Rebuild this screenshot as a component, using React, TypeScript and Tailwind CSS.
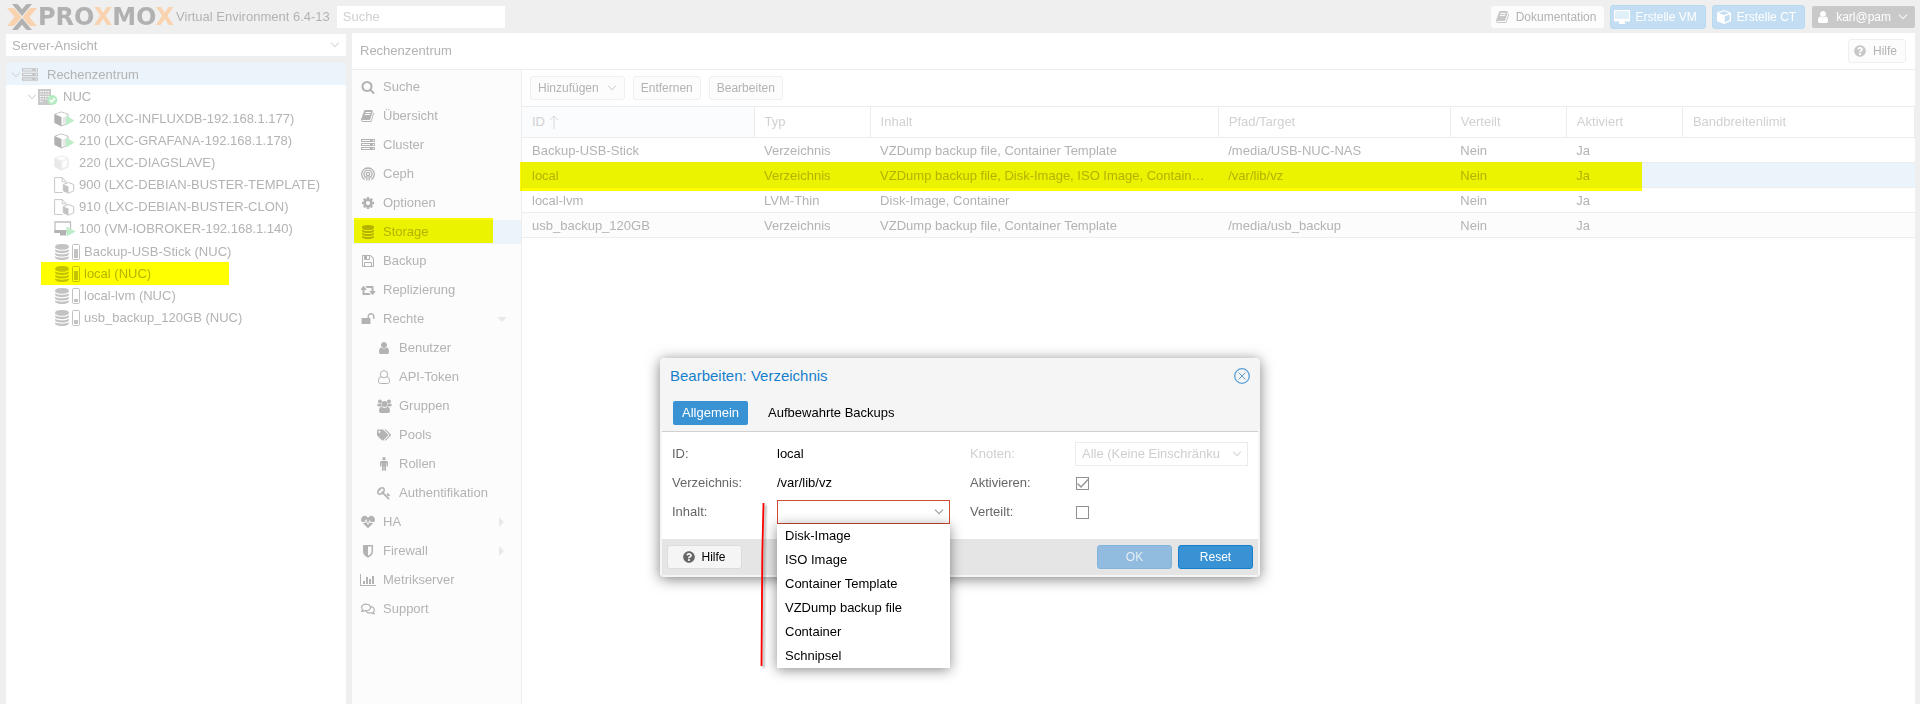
import type { ReactNode } from "react";
import clsx from "clsx";
import { FaHeartbeat, FaQuestionCircle, FaRegComments, FaTags } from "react-icons/fa";

const PATHS = {
  book: "M1639 478q40 57 18 129l-275 906q-19 64-76.5 107.5t-122.5 43.5h-923q-77 0-148.5-53.5t-99.5-131.5q-24-67-2-127 0-4 3-27t4-37q1-8-3-21.5t-3-19.5q2-11 8-21t16.5-23.5 16.5-23.5q23-38 45-91.5t30-91.5q3-10 .5-30t-.5-28q3-11 17-28t17-23q21-36 42-92t25-90q1-9-2.5-32t.5-28q4-13 22-30.5t22-22.5q19-26 42.5-84.5t27.5-96.5q1-8-3-25.5t-2-26.5q2-8 9-18t18-23 17-21q8-12 16.5-30.5t15-35 16-36 19.5-32 26.5-23.5 36-11.5 47.5 5.5l-1 3q38-9 51-9h761q74 0 114 56t18 130l-274 906q-36 119-71.5 153.5t-128.5 34.5h-869q-27 0-38 15-11 16-1 43 24 70 144 70h923q29 0 56-15.5t35-41.5l300-987q7-22 5-57 38 15 59 43zm-1064 2q-4 13 2 22.5t20 9.5h608q13 0 25.5-9.5t16.5-22.5l21-64q4-13-2-22.5t-20-9.5h-608q-13 0-25.5 9.5t-16.5 22.5zm-83 256q-4 13 2 22.5t20 9.5h608q13 0 25.5-9.5t16.5-22.5l21-64q4-13-2-22.5t-20-9.5h-608q-13 0-25.5 9.5t-16.5 22.5z",
  search:
    "M1216 832q0-185-131.5-316.5t-316.5-131.5-316.5 131.5-131.5 316.5 131.5 316.5 316.5 131.5 316.5-131.5 131.5-316.5zm512 832q0 52-38 90t-90 38q-54 0-90-38l-343-342q-179 124-399 124-143 0-273.5-55.5t-225-150-150-225-55.5-273.5 55.5-273.5 150-225 225-150 273.5-55.5 273.5 55.5 225 150 150 225 55.5 273.5q0 220-124 399l343 343q37 37 37 90z",
  server:
    "M128 1408h1024v-128h-1024v128zm0-512h1024v-128h-1024v128zm1568 448q0-40-28-68t-68-28-68 28-28 68 28 68 68 28 68-28 28-68zm-1568-960h1024v-128h-1024v128zm1568 448q0-40-28-68t-68-28-68 28-28 68 28 68 68 28 68-28 28-68zm0-512q0-40-28-68t-68-28-68 28-28 68 28 68 68 28 68-28 28-68zm96 832v384h-1792v-384h1792zm0-512v384h-1792v-384h1792zm0-512v384h-1792v-384h1792z",
  cog: "M1152 896q0-106-75-181t-181-75-181 75-75 181 75 181 181 75 181-75 75-181zm512-109v222q0 12-8 23t-20 13l-185 28q-19 54-39 91 35 50 107 138 10 12 10 25t-9 23q-27 37-99 108t-94 71q-12 0-26-9l-138-108q-44 23-91 38-16 136-29 186-7 28-36 28h-222q-14 0-24.5-8.5t-11.5-21.5l-28-184q-49-16-90-37l-141 107q-10 9-25 9-14 0-25-11-126-114-165-168-7-10-7-23 0-12 8-23 15-21 51-66.5t54-70.5q-27-50-41-99l-183-27q-13-2-21-12.5t-8-23.5v-222q0-12 8-23t19-13l186-28q14-46 39-92-40-57-107-138-10-12-10-24 0-10 9-23 26-36 98.5-107.5t94.5-71.5q13 0 26 10l138 107q44-23 91-38 16-136 29-186 7-28 36-28h222q14 0 24.5 8.5t11.5 21.5l28 184q49 16 90 37l142-107q9-9 24-9 13 0 25 10 129 119 165 170 7 8 7 22 0 12-8 23-15 21-51 66.5t-54 70.5q26 50 41 98l183 28q13 2 21 12.5t8 23.5z",
  database:
    "M896 768q237 0 443-43t325-127v170q0 69-103 128t-280 93.5-385 34.5-385-34.5-280-93.5-103-128v-170q119 84 325 127t443 43zm0 768q237 0 443-43t325-127v170q0 69-103 128t-280 93.5-385 34.5-385-34.5-280-93.5-103-128v-170q119 84 325 127t443 43zm0-384q237 0 443-43t325-127v170q0 69-103 128t-280 93.5-385 34.5-385-34.5-280-93.5-103-128v-170q119 84 325 127t443 43zm0-1152q208 0 385 34.5t280 93.5 103 128v128q0 69-103 128t-280 93.5-385 34.5-385-34.5-280-93.5-103-128v-128q0-69 103-128t280-93.5 385-34.5z",
  floppy:
    "M512 1536h768v-384h-768v384zm896 0h128v-896q0-14-10-38.5t-20-34.5l-281-281q-10-10-34-20t-39-10v416q0 40-28 68t-68 28h-576q-40 0-68-28t-28-68v-416h-128v1280h128v-416q0-40 28-68t68-28h832q40 0 68 28t28 68v416zm-384-928v-320q0-13-9.5-22.5t-22.5-9.5h-192q-13 0-22.5 9.5t-9.5 22.5v320q0 13 9.5 22.5t22.5 9.5h192q13 0 22.5-9.5t9.5-22.5zm640 32v928q0 40-28 68t-68 28h-1344q-40 0-68-28t-28-68v-1344q0-40 28-68t68-28h928q40 0 88 20t76 48l280 280q28 28 48 76t20 88z",
  retweet:
    "M1216 1504q0 13-9.5 22.5t-22.5 9.5h-960q-8 0-13.5-2t-9-7-5.5-8-3-11.5-1-11.5v-600h-192q-26 0-45-19t-19-45q0-24 15-41l320-384q19-22 49-22t49 22l320 384q15 17 15 41 0 26-19 45t-45 19h-192v384h576q16 0 25 11l160 192q7 10 7 21zm640-416q0 24-15 41l-320 384q-20 23-49 23t-49-23l-320-384q-15-17-15-41 0-26 19-45t45-19h192v-384h-576q-16 0-25-12l-160-192q-7-9-7-20 0-13 9.5-22.5t22.5-9.5h960q8 0 13.5 2t9 7 5.5 8 3 11.5 1 11.5v600h192q26 0 45 19t19 45z",
  unlock:
    "M1728 576v256q0 26-19 45t-45 19h-64q-26 0-45-19t-19-45v-256q0-106-75-181t-181-75-181 75-75 181v192h96q40 0 68 28t28 68v576q0 40-28 68t-68 28h-960q-40 0-68-28t-28-68v-576q0-40 28-68t68-28h672v-192q0-185 131.5-316.5t316.5-131.5 316.5 131.5 131.5 316.5z",
  user: "M1536 1399q0 109-62.5 187t-150.5 78h-854q-88 0-150.5-78t-62.5-187q0-85 8.5-160.5t31.5-152 58.5-131 94-89 134.5-34.5q131 128 313 128t313-128q76 0 134.5 34.5t94 89 58.5 131 31.5 152 8.5 160.5zm-256-887q0 159-112.5 271.5t-271.5 112.5-271.5-112.5-112.5-271.5 112.5-271.5 271.5-112.5 271.5 112.5 112.5 271.5z",
  key: "M832 512q0-80-56-136t-136-56-136 56-56 136q0 42 19 83-41-19-83-19-80 0-136 56t-56 136 56 136 136 56 136-56 56-136q0-42-19-83 41 19 83 19 80 0 136-56t56-136zm851 704q0 17-49 66t-66 49q-9 0-28.5-16t-36.5-33-38.5-40-24.5-26l-96 96 220 220q28 28 28 68 0 42-39 81t-81 39q-40 0-68-28l-671-671q-176 131-365 131-163 0-265.5-102.5t-102.5-265.5q0-160 95-313t248-248 313-95q163 0 265.5 102.5t102.5 265.5q0 189-131 365l355 355 96-96q-3-3-26-24.5t-40-38.5-33-36.5-16-28.5q0-17 49-66t66-49q13 0 23 10 6 6 46 44.5t82 79.5 86.5 86 73 78 28.5 41z",
};

const Glyph = ({ name, className = "size-[14px]" }: { name: keyof typeof PATHS; className?: string }) => (
  <svg viewBox={name === "retweet" ? "0 0 1920 1792" : "0 0 1792 1792"} className={className} fill="currentColor" aria-hidden>
    <path d={PATHS[name]} />
  </svg>
);

const Chevron = ({ className }: { className?: string }) => (
  <svg viewBox="0 0 10 6" className={clsx("pointer-events-none h-[6px] w-[10px]", className)} fill="none" stroke="currentColor" aria-hidden>
    <path d="M1 .7l4 4 4-4" strokeWidth="1.2" />
  </svg>
);

const CephIcon = () => (
  <svg viewBox="0 0 14 14" className="size-[14px]" fill="none" stroke="currentColor" strokeWidth="1.3" aria-hidden>
    <path d="M3.6 12.6a6.3 6.3 0 1 1 6.8 0M5 10.6a4 4 0 1 1 4 0" />
    <circle cx="7" cy="7" r="1.7" />
    <path d="M5.9 9v4.6M8.1 9v4.6" />
  </svg>
);

const UserOutline = () => (
  <svg viewBox="0 0 14 14" className="size-[14px]" fill="none" stroke="currentColor" aria-hidden>
    <path d="M4.2 6.6C2.4 6.9 1.5 8.6 1.5 11c0 1.600.8 2.500 2.200 2.500h6.600c1.400 0 2.200-.9 2.200-2.500 0-2.400-.9-4.100-2.700-4.400" />
    <circle cx="7" cy="4.2" r="3.6" />
  </svg>
);

const UserGroup = () => (
  <svg viewBox="0 0 15 14" className="h-[14px] w-[15px]" fill="currentColor" aria-hidden>
    <circle cx="3" cy="2.5" r="2" />
    <circle cx="12" cy="2.5" r="2" />
    <circle cx="7.5" cy="5" r="2.900" />
    <path d="M1.300 4.800h3c0 1.200.3 1.900.8 2.700H1.700C.6 7.500.2 6.700.3 5.800c0-.6.4-1 1-1zM13.700 4.800h-3c0 1.200-.3 1.900-.8 2.700h3.400c1.100 0 1.500-.8 1.400-1.700 0-.6-.4-1-1-1z" />
    <path d="M4.600 7.800c1.600 1.500 4.200 1.500 5.800 0 1.700.2 2.600 1.700 2.600 4 0 1.400-.8 2.200-2 2.200H4c-1.200 0-2-.8-2-2.200 0-2.300.9-3.800 2.600-4z" />
  </svg>
);

const Person = () => (
  <svg viewBox="0 0 14 14" className="size-[14px]" fill="currentColor" aria-hidden>
    <circle cx="7" cy="1.800" r="1.700" />
    <path d="M4.500 4h5c.9 0 1.500.6 1.500 1.500V9c0 .9-1.500.9-1.500 0V6H9v7.200c0 1-1.700 1-1.700 0V9.500h-.6v3.700c0 1-1.700 1-1.700 0V6h-.5v3c0 .9-1.500.9-1.500 0V5.500C3 4.600 3.600 4 4.500 4z" />
  </svg>
);

const Shield = () => (
  <svg viewBox="0 0 14 14" className="size-[14px]" fill="currentColor" aria-hidden>
    <path fillRule="evenodd" d="M2.500 1h9c.3 0 .5.200.5.500v6c0 2.900-2.200 4.900-5 6.200C4.200 12.400 2 10.400 2 7.500v-6c0-.3.2-.5.5-.5zM7 2.500v9.300c2-1 3.500-2.400 3.500-4.300v-5z" />
  </svg>
);

const BarChart = () => (
  <svg viewBox="0 0 16 14" className="h-[14px] w-[16px]" fill="currentColor" aria-hidden>
    <path d="M0 1h1v11h15v1H0zM3 8h2v3H3zM6 4h2v7H6zM9 6h2v5H9zM12 3h2v8h-2z" />
  </svg>
);

const SolidCube = () => (
  <svg viewBox="0 0 14 14" className="size-[14px]" fill="currentColor" aria-hidden>
    <path fillRule="evenodd" d="M7 0l6.300 2.300c.4.200.7.5.7.900v7.300c0 .4-.2.800-.6 1L7 14l-6.400-2.500c-.4-.2-.6-.6-.6-1V3.200c0-.4.3-.7.700-.9zM7 1.200L1.800 3.100 7 5l5.200-1.900zM7.800 6.300v6l4.800-2V4.500z" />
  </svg>
);

const SolidMonitor = () => (
  <svg viewBox="0 0 16 14" className="h-[14px] w-4" fill="currentColor" aria-hidden>
    <path fillRule="evenodd" d="M1 0h14c.6 0 1 .4 1 1v9.500c0 .6-.4 1-1 1h-4.500l.5 1.500c.6.2.6 1 0 1H5c-.6 0-.6-.8 0-1l.5-1.500H1c-.6 0-1-.4-1-1V1c0-.6.400-1 1-1zM1.200 1.200v7.600h13.600V1.200z" />
    <path d="M1.200 1.200h13.600v7.600H1.200z" opacity=".5" />
  </svg>
);

const Cube = ({ dim }: { dim?: boolean }) => (
  <svg viewBox="0 0 21 16" className="h-4 w-[21px]" aria-hidden>
    <path d="M7.500 1L14 3.300v8.400L7.500 15 .8 11.700V3.300z" fill={dim ? "#f2f2f2" : "#fff"} stroke={dim ? "#e8e8e8" : "#bbb"} />
    <path d="M.8 3.300L7.500 6v9L.8 11.700z" fill={dim ? "#e9e9e9" : "#b0b0b0"} />
    <path d="M2 3.300l5.500-1.900L13 3.300 7.500 5.300z" fill="#fff" />
    <path d="M8.700 6.800l4.200-1.700v5.800l-4.200 2.200z" fill={dim ? "#fff" : "#e6e6e6"} />
    {!dim && <path d="M12 4.500l8.500 5L12 14.500z" fill="#bcecc8" />}
  </svg>
);

const TemplateIcon = () => (
  <svg viewBox="0 0 21 17" className="h-[17px] w-[21px]" aria-hidden>
    <path d="M8.500 15.500H.6V.6h7.600l4.300 4.300M8.200.6v4.300h4.300" fill="none" stroke="#c8c8c8" />
    <path d="M14.500 5.500l5.200 2v6.300l-5.200 2.400-5.200-2.400V7.500z" fill="#fff" stroke="#c4c4c4" />
    <path d="M9.300 7.500l5.200 2v6.700l-5.200-2.400z" fill="#c4c4c4" />
  </svg>
);

const MonitorIcon = () => (
  <svg viewBox="0 0 22 16" className="h-4 w-[22px]" aria-hidden>
    <path d="M1 1h15.500v9H1z" fill="#fff" stroke="#c0c0c0" strokeWidth="1.300" />
    <path d="M.4 9h12v3H.4zM6 12h6v2.500H6z" fill="#b3b3b3" />
    <path d="M12.500 5.500l9 5-9 5z" fill="#bcecc8" />
  </svg>
);

const NodeIcon = () => (
  <svg viewBox="0 0 20 17" className="h-[17px] w-5" aria-hidden>
    <path d="M0 0h13v16H0z" fill="#c9c9c9" />
    <path d="M2 2.500h9M2 5h9M2 7.500h9M2 10h9M2 12.500h3" stroke="#fff" strokeWidth="1.200" strokeDasharray="1.500 1" />
    <circle cx="14.300" cy="11" r="5" fill="#b7ebc3" />
    <path d="M11.800 11l1.900 1.900 3.200-3.500" stroke="#fff" strokeWidth="1.600" fill="none" />
  </svg>
);

const StorageIcon = ({ level }: { level: number }) => (
  <span className="flex items-center gap-[2px] text-[#c3c3c3]">
    <Glyph name="database" className="size-4" />
    <svg viewBox="0 0 8 16" className="h-4 w-2" aria-hidden>
      <rect x=".5" y=".5" width="7" height="15" rx="1" fill="none" stroke="currentColor" />
      <rect x="2" y={14 - level} width="4" height={level} fill="currentColor" />
    </svg>
  </span>
);

const Logo = () => (
  <div className="flex items-center gap-px" aria-label="Proxmox">
    <svg viewBox="0 0 30 26" className="h-[26px] w-[30px]" aria-hidden>
      <path d="M0 4h5c1.500 0 2.500.4 3.500 1.600l6 7.400-6 7.400C7.500 21.600 6.500 22 5 22H0l7.500-9zM30 4h-5c-1.500 0-2.500.4-3.500 1.600l-6 7.400 6 7.400c1 1.200 2 1.600 3.500 1.600h5l-7.500-9z" fill="#f9d3b0" />
      <path d="M5 0h3.500c1.500 0 2.400.4 3.400 1.500L15 5.200l3.100-3.700C19.100.4 20 0 21.500 0H25L15 12zM5 26h3.500c1.500 0 2.400-.4 3.400-1.500l3.100-3.700 3.100 3.700c1 1.100 1.900 1.500 3.400 1.500H25L15 14z" fill="#b1b1b1" />
    </svg>
    <span className="font-['DejaVu_Sans'] text-[24px] leading-6 font-bold text-[#b1b1b1]">
      PRO<span className="text-[#f9d3b0]">X</span>MO<span className="text-[#f9d3b0]">X</span>
    </span>
  </div>
);

const guests = [
  { label: "200 (LXC-INFLUXDB-192.168.1.177)", icon: <Cube /> },
  { label: "210 (LXC-GRAFANA-192.168.1.178)", icon: <Cube /> },
  { label: "220 (LXC-DIAGSLAVE)", icon: <Cube dim /> },
  { label: "900 (LXC-DEBIAN-BUSTER-TEMPLATE)", icon: <TemplateIcon /> },
  { label: "910 (LXC-DEBIAN-BUSTER-CLON)", icon: <TemplateIcon /> },
  { label: "100 (VM-IOBROKER-192.168.1.140)", icon: <MonitorIcon /> },
];

const storages = [
  { label: "Backup-USB-Stick (NUC)", level: 9 },
  { label: "local (NUC)", level: 9, marked: true },
  { label: "local-lvm (NUC)", level: 3 },
  { label: "usb_backup_120GB (NUC)", level: 4 },
];

type NavItem = { label: string; icon: ReactNode; sub?: boolean; arrow?: "down" | "right"; active?: boolean };

const nav: NavItem[] = [
  { label: "Suche", icon: <Glyph name="search" /> },
  { label: "Übersicht", icon: <Glyph name="book" /> },
  { label: "Cluster", icon: <Glyph name="server" /> },
  { label: "Ceph", icon: <CephIcon /> },
  { label: "Optionen", icon: <Glyph name="cog" /> },
  { label: "Storage", icon: <Glyph name="database" />, active: true },
  { label: "Backup", icon: <Glyph name="floppy" /> },
  { label: "Replizierung", icon: <Glyph name="retweet" className="h-[14px] w-[15px]" /> },
  { label: "Rechte", icon: <Glyph name="unlock" />, arrow: "down" },
  { label: "Benutzer", icon: <Glyph name="user" />, sub: true },
  { label: "API-Token", icon: <UserOutline />, sub: true },
  { label: "Gruppen", icon: <UserGroup />, sub: true },
  { label: "Pools", icon: <FaTags className="size-[14px]" />, sub: true },
  { label: "Rollen", icon: <Person />, sub: true },
  { label: "Authentifikation", icon: <Glyph name="key" />, sub: true },
  { label: "HA", icon: <FaHeartbeat className="size-[14px]" />, arrow: "right" },
  { label: "Firewall", icon: <Shield />, arrow: "right" },
  { label: "Metrikserver", icon: <BarChart /> },
  { label: "Support", icon: <FaRegComments className="size-[14px]" /> },
];

const columns = [
  { label: "ID", width: "w-1/6" },
  { label: "Typ", width: "w-1/12" },
  { label: "Inhalt", width: "w-1/4" },
  { label: "Pfad/Target", width: "w-1/6" },
  { label: "Verteilt", width: "w-1/12" },
  { label: "Aktiviert", width: "w-1/12" },
  { label: "Bandbreitenlimit", width: "w-1/6" },
];

const rows = [
  ["Backup-USB-Stick", "Verzeichnis", "VZDump backup file, Container Template", "/media/USB-NUC-NAS", "Nein", "Ja", ""],
  ["local", "Verzeichnis", "VZDump backup file, Disk-Image, ISO Image, Contain…", "/var/lib/vz", "Nein", "Ja", ""],
  ["local-lvm", "LVM-Thin", "Disk-Image, Container", "", "Nein", "Ja", ""],
  ["usb_backup_120GB", "Verzeichnis", "VZDump backup file, Container Template", "/media/usb_backup", "Nein", "Ja", ""],
];

const contentTypes = ["Disk-Image", "ISO Image", "Container Template", "VZDump backup file", "Container", "Schnipsel"];

const Header = () => (
  <header className="flex h-[33px] items-center pr-[5px] pl-[7px]">
    <Logo />
    <span className="ml-[2px] whitespace-nowrap">Virtual Environment 6.4-13</span>
    <input
      type="text"
      aria-label="Suche"
      placeholder="Suche"
      className="ml-[7px] h-[22px] w-[168px] bg-white px-[6px] outline-none placeholder:text-[#d0d0d0]"
    />
    <div className="ml-auto flex items-center text-[12px] whitespace-nowrap">
      <button className="flex h-[22px] items-center gap-[6px] rounded-[3px] bg-[#fcfcfc] pr-2 pl-[5px]">
        <Glyph name="book" className="size-[14px] text-[#c8c8c8]" />
        Dokumentation
      </button>
      <button className="ml-[6px] flex h-6 items-center gap-[5px] rounded-[3px] border border-[#b8daf0] bg-[#c3def2] pr-2 pl-[3px] text-white">
        <SolidMonitor />
        Erstelle VM
      </button>
      <button className="ml-[6px] flex h-6 items-center gap-[6px] rounded-[3px] border border-[#b8daf0] bg-[#c3def2] pr-2 pl-1 text-white">
        <SolidCube />
        Erstelle CT
      </button>
      <button className="ml-[7px] flex h-[22px] items-center gap-[6px] rounded-[2px] bg-[#c8c9c8] pr-[7px] pl-1 text-white">
        <Glyph name="user" />
        karl@pam
        <Chevron className="ml-px opacity-80" />
      </button>
    </div>
  </header>
);

const ResourceTree = () => (
  <aside className="flex w-[340px] shrink-0 flex-col gap-[7px] pt-px">
    <div className="relative flex items-center">
      <select aria-label="Ansicht" className="h-[22px] w-full appearance-none bg-white px-[6px] pt-px outline-none">
        <option>Server-Ansicht</option>
      </select>
      <Chevron className="absolute right-[6px] text-[#dadada]" />
    </div>
    <ul className="flex-1 bg-white">
      <li className="flex h-[22px] items-center bg-[#ebf3fb] pt-[2px] pl-[5px]">
        <Chevron className="text-[#dadada]" />
        <Glyph name="server" className="ml-px size-4 text-[#c3c3c3]" />
        <span className="ml-[9px]">Rechenzentrum</span>
      </li>
      <li className="flex h-[22px] items-center pt-[2px] pl-[21px]">
        <Chevron className="text-[#dadada]" />
        <span className="ml-px">
          <NodeIcon />
        </span>
        <span className="ml-[5px]">NUC</span>
      </li>
      {guests.map((g) => (
        <li key={g.label} className="flex h-[22px] items-center pt-[2px] pl-12 whitespace-nowrap">
          <span className="w-[25px]">{g.icon}</span>
          {g.label}
        </li>
      ))}
      <li className="pt-px">
        <ul>
          {storages.map((s) => (
            <li key={s.label} className="relative flex h-[22px] items-center gap-1 pt-[2px] pl-12">
              <StorageIcon level={s.level} />
              {s.label}
              {s.marked && <span className="absolute top-0 left-[35px] h-[23px] w-[188px] bg-[#ff0] mix-blend-multiply" />}
            </li>
          ))}
        </ul>
      </li>
    </ul>
  </aside>
);

const NavMenu = () => (
  <nav className="w-[170px] shrink-0 border-r border-[#ededed] bg-[#fcfcfc] pt-[5px]">
    <ul className="flex flex-col gap-[5px]">
      {nav.map((item) => (
        <li key={item.label} className={clsx("relative", item.active && "bg-[#ebf3fb]")}>
          <a href="#" className={clsx("flex h-6 items-center", item.sub ? "pl-6" : "pl-2")}>
            <span className="mr-[7px] flex w-4 justify-center">{item.icon}</span>
            {item.label}
            {item.arrow && (
              <svg viewBox="0 0 10 10" className="mr-[14px] ml-auto size-[10px]" fill="#e8e8e8" aria-hidden>
                <path d={item.arrow === "down" ? "M0 3h10L5 8z" : "M2 0l5 5-5 5z"} />
              </svg>
            )}
          </a>
          {item.active && <span className="absolute -top-[2px] left-[2px] h-[25px] w-[139px] bg-[#ff0] mix-blend-multiply" />}
        </li>
      ))}
    </ul>
  </nav>
);

const ToolButton = ({ children }: { children: ReactNode }) => (
  <button className="flex h-6 items-center gap-2 rounded-[3px] border border-[#efefef] bg-[#fcfcfc] px-[7px] text-[12px]">
    {children}
  </button>
);

const StorageTable = () => (
  <div className="relative border-t border-[#ededed]">
    <table className="w-full table-fixed border-collapse text-left">
      <thead>
        <tr className="h-[30px] border-b border-[#ededed] text-[#d1d1d1]">
          {columns.map((c, i) => (
            <th key={c.label} className={clsx("border-r border-[#ededed] px-[10px] font-normal", c.width, i === 0 && "bg-[#fafcfe]")}>
              <span className="flex items-center gap-1">
                {c.label}
                {i === 0 && (
                  <svg viewBox="0 0 10 14" className="h-[14px] w-[10px]" fill="none" stroke="#d9d9d9" aria-hidden>
                    <path d="M5 14V1M1 5l4-4 4 4" />
                  </svg>
                )}
              </span>
            </th>
          ))}
        </tr>
      </thead>
      <tbody>
        {rows.map((row, i) => (
          <tr key={row[0]} className={clsx("h-[25px] border-b border-[#ededed]", i === 1 && "bg-[#ebf3fb]", i === 3 && "bg-[#fcfcfc]")}>
            {row.map((cell, j) => (
              <td key={j} className="truncate px-[10px] pt-[2px] leading-[22px]">
                {cell}
              </td>
            ))}
          </tr>
        ))}
      </tbody>
    </table>
    <span className="absolute top-[55px] -left-[2px] h-[29px] w-[1122px] bg-[#ff0] mix-blend-multiply" />
  </div>
);

const DialogTick = ({ id, label, checked }: { id: string; label: string; checked?: boolean }) => (
  <div className="flex h-6 items-center">
    <label htmlFor={id} className="w-[105px] text-[#666]">
      {label}
    </label>
    <span className="relative ml-px flex">
      <input id={id} type="checkbox" defaultChecked={checked} className="size-[13px] appearance-none border border-[#919191] bg-white" />
      {checked && (
        <svg viewBox="0 0 13 13" className="pointer-events-none absolute inset-0 size-[13px]" fill="none" stroke="#919191" aria-hidden>
          <path d="M1.500 6.500l3.500 3.500 7-7.500" strokeWidth="1.300" />
        </svg>
      )}
    </span>
  </div>
);

const EditDialog = () => (
  <section
    role="dialog"
    aria-labelledby="dialog-title"
    className="absolute top-[358px] left-1/2 w-[600px] -translate-x-1/2 rounded-[4px] border-2 border-[#f5f5f5] bg-white leading-5 text-black shadow-[0_2px_14px_rgba(0,0,0,0.5)]"
  >
    <div className="border-b border-[#d0d0d0] bg-[#f5f5f5]">
      <div className="flex h-8 items-center justify-between pr-2 pl-2">
        <h2 id="dialog-title" className="text-[15px] text-[#157fcc]">
          Bearbeiten: Verzeichnis
        </h2>
        <button aria-label="Schließen">
          <svg viewBox="0 0 16 16" className="size-4" fill="none" stroke="#5a9fd4" aria-hidden>
            <circle cx="8" cy="8" r="7.300" strokeWidth="1.300" />
            <path d="M4.500 4.500l7 7M11.500 4.500l-7 7" />
          </svg>
        </button>
      </div>
      <div role="tablist" className="flex pt-[9px] pb-[6px] pl-[11px]">
        <button role="tab" aria-selected="true" className="h-6 rounded-[2px] bg-[#3892d4] px-[9px] text-white">
          Allgemein
        </button>
        <button role="tab" aria-selected="false" className="ml-[11px] h-6 px-[9px]">
          Aufbewahrte Backups
        </button>
      </div>
    </div>
    <div className="grid grid-cols-2 gap-5 px-[10px] pt-[10px] pb-[15px]">
      <div className="flex flex-col gap-[5px]">
        <div className="flex h-6 items-center">
          <span className="w-[105px] text-[#666]">ID:</span>
          local
        </div>
        <div className="flex h-6 items-center">
          <span className="w-[105px] text-[#666]">Verzeichnis:</span>
          /var/lib/vz
        </div>
        <div className="flex h-6 items-center">
          <label htmlFor="content" className="w-[105px] text-[#666]">
            Inhalt:
          </label>
          <div className="relative flex flex-1 items-center">
            <select id="content" defaultValue="" className="h-6 w-full appearance-none border border-[#cf4c35] bg-white px-2 outline-none">
              <option value=""></option>
            </select>
            <Chevron className="absolute right-[6px] text-[#a0a0a0]" />
            <ul role="listbox" aria-label="Inhalt" className="absolute top-6 left-0 w-full bg-white shadow-[0_2px_12px_rgba(0,0,0,0.45)]">
              {contentTypes.map((type) => (
                <li key={type} role="option" aria-selected="false" className="flex h-6 items-center px-2">
                  {type}
                </li>
              ))}
            </ul>
            <svg viewBox="0 0 10 166" className="absolute top-[2px] -left-[18px] h-[166px] w-[10px] drop-shadow-[2px_2px_1px_rgba(0,0,0,0.35)]" fill="none" stroke="#f00" aria-hidden>
              <path d="M4.500 1L3.300 52 2.500 164" strokeWidth="1.800" />
            </svg>
          </div>
        </div>
      </div>
      <div className="flex flex-col gap-[5px]">
        <div className="flex h-6 items-center text-[#cfcfcf]">
          <label htmlFor="nodes" className="w-[105px]">
            Knoten:
          </label>
          <div className="relative flex flex-1 items-center">
            <select id="nodes" disabled className="h-6 w-full appearance-none border border-[#ececec] bg-white px-[6px]">
              <option>Alle (Keine Einschränku</option>
            </select>
            <Chevron className="absolute right-[6px] text-[#d9d9d9]" />
          </div>
        </div>
        <DialogTick id="enabled" label="Aktivieren:" checked />
        <DialogTick id="shared" label="Verteilt:" />
      </div>
    </div>
    <div className="flex gap-[6px] bg-[#e5e5e5] px-[5px] py-[6px] text-[12px]">
      <button className="mr-auto flex h-6 w-[75px] items-center justify-center gap-[6px] rounded-[3px] border border-[#dcdcdc] bg-[#f5f5f5]">
        <FaQuestionCircle className="size-3 text-[#666]" />
        Hilfe
      </button>
      <button disabled className="h-6 w-[75px] rounded-[3px] border border-[#81b5dc] bg-[#91bcdf] text-[#e4eef6]">
        OK
      </button>
      <button className="h-6 w-[75px] rounded-[3px] border border-[#157fcc] bg-[#3892d4] text-white">Reset</button>
    </div>
  </section>
);

export default function App() {
  return (
    <div className="relative flex min-h-screen flex-col bg-[#efefef] font-['Liberation_Sans',Arial,sans-serif] text-[13px] text-[#b3b3b3]">
      <Header />
      <div className="flex flex-1 gap-[6px] pr-[5px] pl-[6px]">
        <ResourceTree />
        <main className="flex min-w-0 flex-1 flex-col bg-white">
          <div className="flex h-[37px] items-center justify-between border-b border-[#ededed] pr-[9px] pl-2">
            <h1>Rechenzentrum</h1>
            <button className="flex h-6 items-center gap-[7px] rounded-[3px] border border-[#efefef] bg-[#fcfcfc] pr-2 pl-[5px] text-[12px]">
              <FaQuestionCircle className="size-3 text-[#c8c8c8]" />
              Hilfe
            </button>
          </div>
          <div className="flex flex-1">
            <NavMenu />
            <div className="min-w-0 flex-1">
              <div className="flex h-9 items-center gap-2 px-2">
                <ToolButton>
                  Hinzufügen
                  <Chevron className="text-[#dadada]" />
                </ToolButton>
                <ToolButton>Entfernen</ToolButton>
                <ToolButton>Bearbeiten</ToolButton>
              </div>
              <StorageTable />
            </div>
          </div>
        </main>
      </div>
      <EditDialog />
    </div>
  );
}
